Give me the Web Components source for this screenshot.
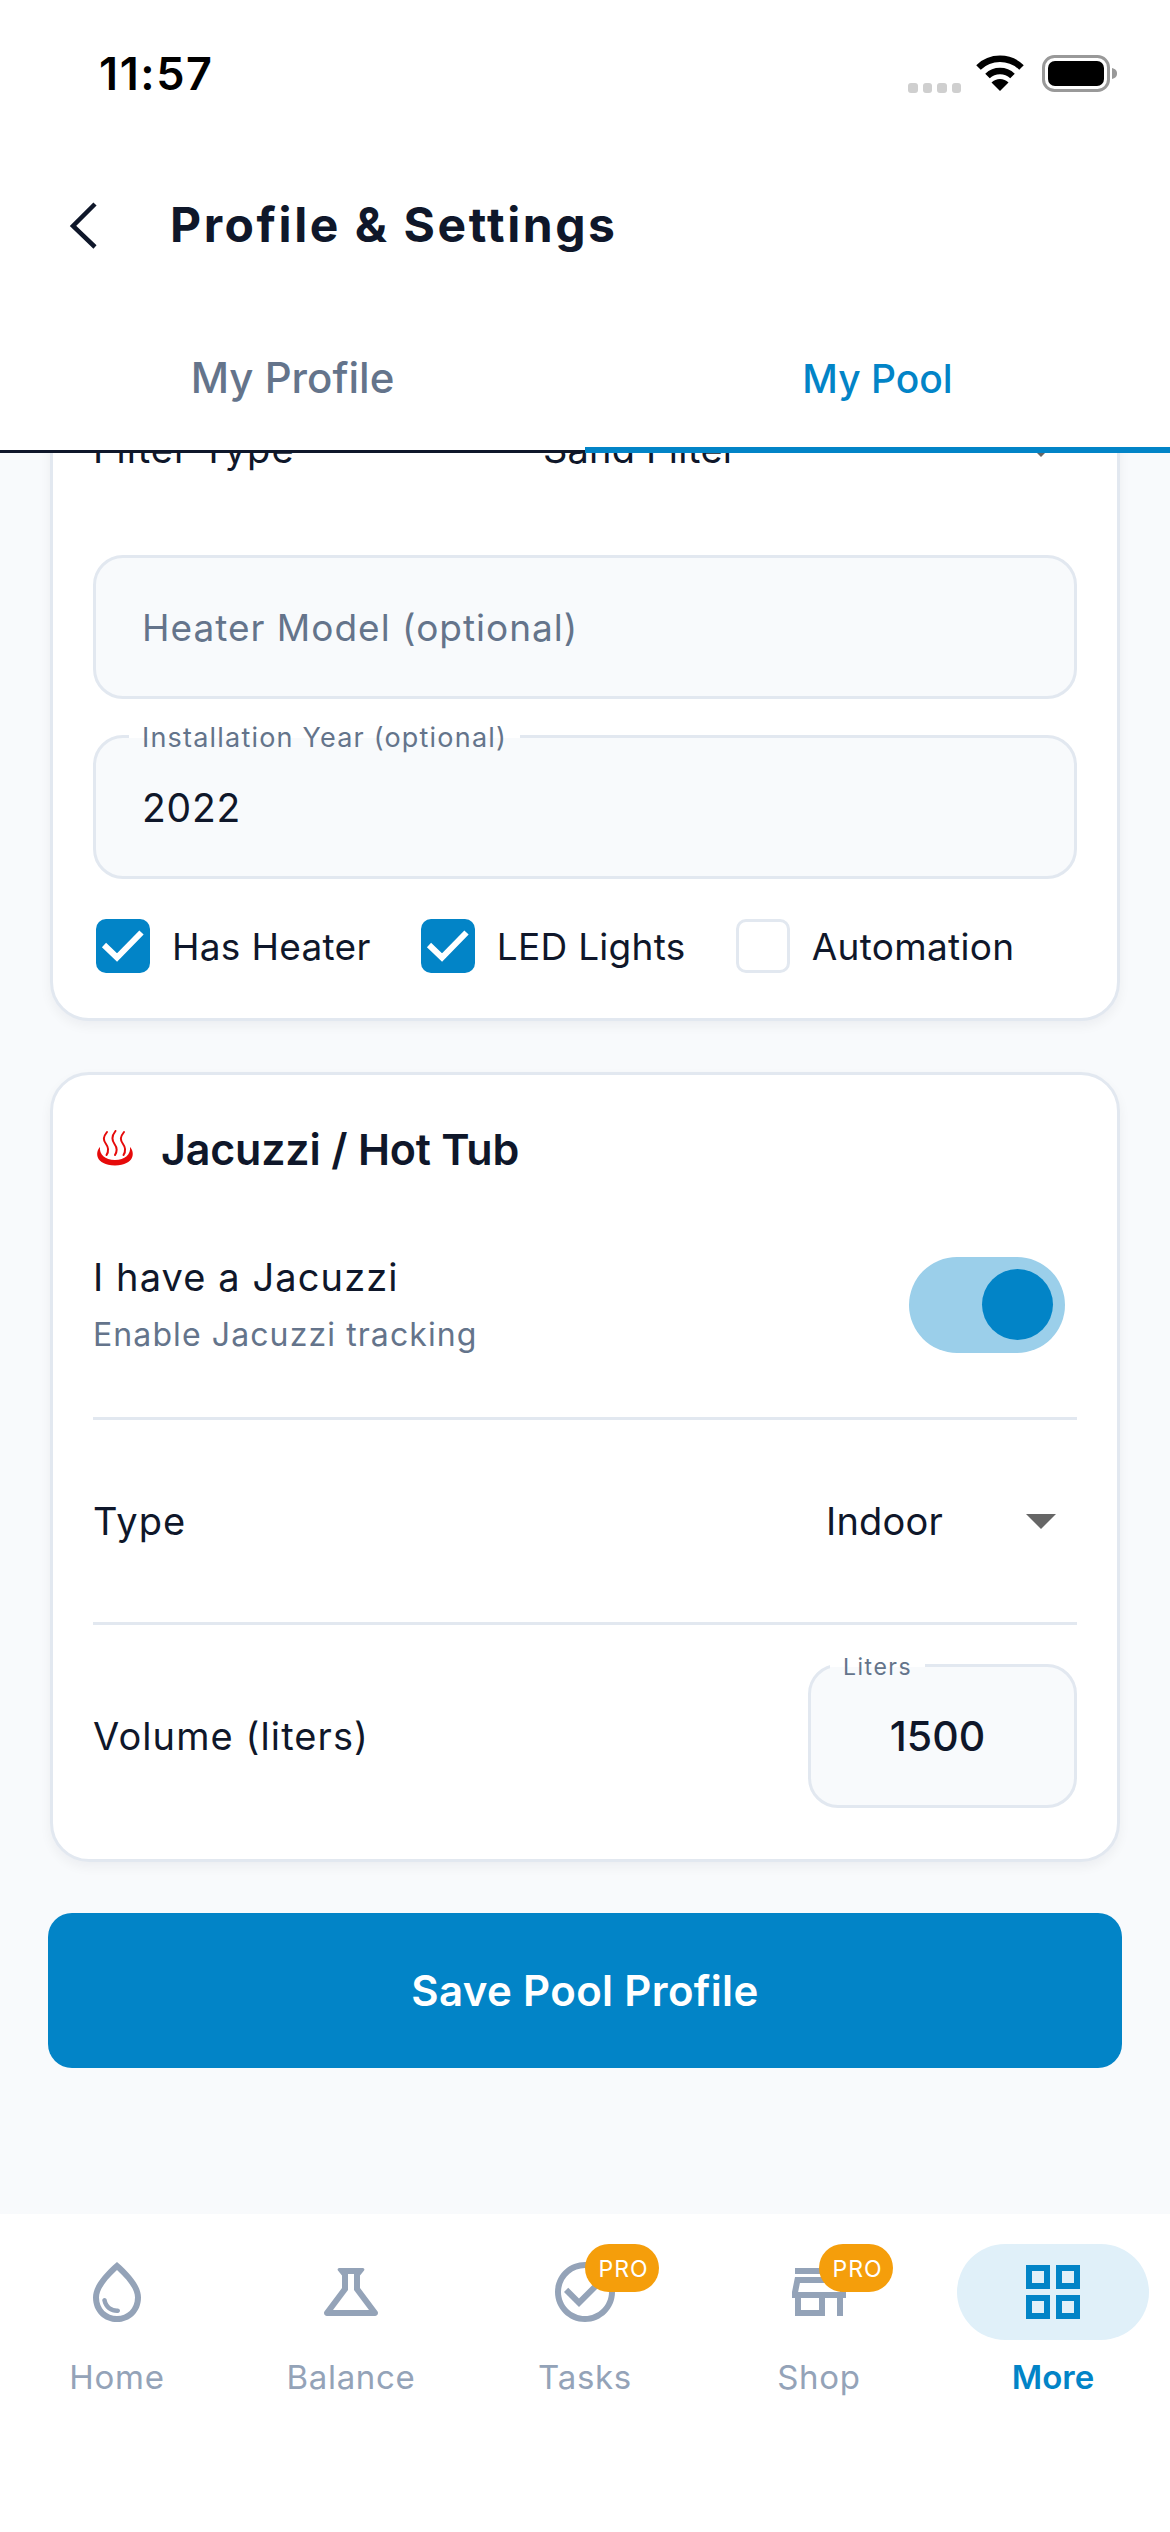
<!DOCTYPE html>
<html>
<head>
<meta charset="utf-8">
<title>Profile & Settings</title>
<style>
  html, body { margin: 0; padding: 0; }
  body { width: 1170px; height: 2532px; overflow: hidden; font-family: Inter, "Liberation Sans", sans-serif; color: #0f172a; }
</style>
</head>
<body>
<app-shell>
  <status-bar slot="top" time="11:57"></status-bar>
  <screen-header slot="top">Profile &amp; Settings</screen-header>
  <tab-bar slot="top" first="My Profile" second="My Pool"></tab-bar>

  <setting-card>
    <setting-row label="Filter Type" height="202" style="margin-bottom:5px"><select-value width="564">Sand Filter</select-value></setting-row>
    <outlined-field placeholder="Heater Model (optional)"></outlined-field>
    <outlined-field label="Installation Year (optional)" value="2022" style="margin-top:36px"></outlined-field>
    <check-row>
      <check-option checked>Has Heater</check-option>
      <check-option checked>LED Lights</check-option>
      <check-option>Automation</check-option>
    </check-row>
  </setting-card>

  <setting-card style="margin-top:51px">
    <card-title>Jacuzzi / Hot Tub</card-title>
    <setting-row label="I have a Jacuzzi" sub="Enable Jacuzzi tracking" height="228" divider style="margin-top:9px"><toggle-switch></toggle-switch></setting-row>
    <setting-row label="Type" height="205" divider><select-value width="281">Indoor</select-value></setting-row>
    <setting-row label="Volume (liters)" height="222" style="margin-bottom:12px"><outlined-field small label="Liters" value="1500"></outlined-field></setting-row>
  </setting-card>

  <save-button>Save Pool Profile</save-button>

  <bottom-nav slot="bottom">
    <nav-item icon="drop" label="Home"></nav-item>
    <nav-item icon="flask" label="Balance"></nav-item>
    <nav-item icon="task" label="Tasks" pro></nav-item>
    <nav-item icon="store" label="Shop" pro></nav-item>
    <nav-item icon="grid" label="More" active></nav-item>
  </bottom-nav>
</app-shell>

<script>
// contenedor de la pantalla, el contenido se recorta por arriba como si hubiera scroll
class AppShell extends HTMLElement {
  constructor() {
    super();
    this.attachShadow({ mode: 'open' });
  }
  connectedCallback() {
    this.shadowRoot.innerHTML = `
    <style>
      :host { display: flex; flex-direction: column; width: 1170px; height: 2532px; background: #fff; }
      .scroll {
        flex: 1; min-height: 0; overflow: hidden; background: #f8fafc;
        display: flex; flex-direction: column; justify-content: flex-end;
        padding: 0 50px 146px;
      }
      ::slotted(*) { flex-shrink: 0; }
    </style>
    <slot name="top"></slot>
    <div class="scroll"><slot></slot></div>
    <slot name="bottom"></slot>`;
  }
}

class StatusBar extends HTMLElement {
  constructor() {
    super();
    this.attachShadow({ mode: 'open' });
  }
  connectedCallback() {
    const time = this.getAttribute('time') ?? '';
    this.shadowRoot.innerHTML = `
    <style>
      :host { display: flex; align-items: center; justify-content: space-between; height: 132px; padding: 14px 51px 0 99px; box-sizing: border-box; background: #fff; }
      .time { font: 600 45px/1 Inter, sans-serif; color: #000; letter-spacing: 1.6px; }
      .icons { display: flex; align-items: flex-start; height: 40px; margin-top: 4px; }
      .dots { display: flex; gap: 5px; margin: 28px 14px 0 0; }
      .dots i { width: 9.5px; height: 9.5px; border-radius: 3px; background: #cfcfcf; }
      .wifi { width: 50px; height: 36px; margin-right: 17px; }
      .batt { width: 77px; height: 38px; }
    </style>
    <span class="time">${time}</span>
    <div class="icons">
      <div class="dots"><i></i><i></i><i></i><i></i></div>
      <svg class="wifi" viewBox="0 0 50 36" fill="none" stroke="#000">
        <path d="M3.5 12.5 A31 31 0 0 1 46.5 12.5" stroke-width="6.5"/>
        <path d="M12.5 21 A18 18 0 0 1 37.5 21" stroke-width="6.5"/>
        <path d="M25 36 L16.5 27.5 A12 12 0 0 1 33.500 27.500 Z" fill="#000" stroke="none"/>
      </svg>
      <svg class="batt" viewBox="0 0 77 38">
        <rect x="1.500" y="1.500" width="65" height="34" rx="11" fill="none" stroke="#999" stroke-width="3"/>
        <rect x="6" y="6" width="56" height="25" rx="7" fill="#000"/>
        <path d="M70 13 C74 14 75 16 75 18.500 C75 21 74 23 70 24 Z" fill="#999"/>
      </svg>
    </div>`;
  }
}

class ScreenHeader extends HTMLElement {
  constructor() {
    super();
    this.attachShadow({ mode: 'open' });
  }
  connectedCallback() {
    this.shadowRoot.innerHTML = `
    <style>
      :host { display: flex; align-items: center; height: 186px; padding-left: 68px; background: #fff; }
      svg { width: 32px; height: 48px; margin-right: 70px; }
      h1 { margin: 0; font: 700 48px/1 Inter, sans-serif; color: #0f172a; letter-spacing: 2.55px; white-space: nowrap; }
    </style>
    <svg viewBox="0 0 32 48" fill="none" stroke="#0f172a" stroke-width="4.500"><path d="M27 3 L5 25 L27 46"/></svg>
    <h1><slot></slot></h1>`;
  }
}

class TabBar extends HTMLElement {
  constructor() {
    super();
    this.attachShadow({ mode: 'open' });
  }
  connectedCallback() {
    this.shadowRoot.innerHTML = `
    <style>
      :host { display: grid; grid-template-columns: 1fr 1fr; position: relative; height: 135px; box-sizing: border-box; border-bottom: 3px solid #0f172a; background: #fff; }
      .tab { display: flex; align-items: center; justify-content: center; padding-bottom: 12px; font: 500 42px/1 Inter, sans-serif; color: #64748b; }
      .tab.on { color: #0284c7; font-size: 39px; }
      .line { position: absolute; left: 585px; right: 0; bottom: -3px; height: 6px; background: #0284c7; }
    </style>
    <div class="tab">${this.getAttribute('first')}</div>
    <div class="tab on">${this.getAttribute('second')}</div>
    <div class="line"></div>`;
  }
}

class SettingCard extends HTMLElement {
  constructor() {
    super();
    this.attachShadow({ mode: 'open' });
  }
  connectedCallback() {
    this.shadowRoot.innerHTML = `
    <style>
      :host { display: block; box-sizing: border-box; padding: 40px 40px 0; background: #fff; border: 3px solid #e2e8f0; border-radius: 39px; box-shadow: 0 5px 12px rgba(15,23,42,.05); }
    </style>
    <slot></slot>`;
  }
}

class CardTitle extends HTMLElement {
  constructor() {
    super();
    this.attachShadow({ mode: 'open' });
  }
  connectedCallback() {
    this.shadowRoot.innerHTML = `
    <style>
      :host { display: flex; align-items: center; height: 68px; font: 600 43px/1 Inter, sans-serif; letter-spacing: -0.2px; color: #0f172a; }
      svg { width: 42px; height: 38px; margin: 0 24px 0 2px; }
    </style>
    <svg viewBox="0 0 42 38" fill="none" stroke="#e60a0a" stroke-linecap="round">
      <path d="M12 2 C8 7 8 10 11 14 C14 18 14 21 11.500 25" stroke-width="2"/>
      <path d="M20.500 1 C16.500 6 16.500 10 19.500 14 C22.500 18 22.500 21 20 25" stroke-width="2"/>
      <path d="M29 2 C25 7 25 10 28 14 C31 18 31 21 28.500 25" stroke-width="2"/>
      <path d="M5 17 C0 22 0 35 20 35.500 C40 35 40 22 35 17 C36 24 30 30 20 30 C10 30 4 24 5 17 Z" fill="#e60a0a" stroke="none"/>
    </svg>
    <span><slot></slot></span>`;
  }
}

class SettingRow extends HTMLElement {
  constructor() {
    super();
    this.attachShadow({ mode: 'open' });
  }
  connectedCallback() {
    const label = this.getAttribute('label') ?? '';
    const sub = this.getAttribute('sub');
    const height = this.getAttribute('height') ?? '200';
    const subHtml = sub ? `<div class="sub">${sub}</div>` : '';
    this.shadowRoot.innerHTML = `
    <style>
      :host { display: flex; align-items: center; justify-content: space-between; box-sizing: border-box; height: ${height}px; }
      :host([divider]) { border-bottom: 3px solid #e2e8f0; }
      .label { font: 400 38px/1 Inter, sans-serif; color: #0f172a; letter-spacing: 1.1px; }
      .sub { font: 400 32px/1 Inter, sans-serif; color: #64748b; letter-spacing: 1.1px; margin-top: 23px; }
    </style>
    <div><div class="label">${label}</div>${subHtml}</div>
    <slot></slot>`;
  }
}

class SelectValue extends HTMLElement {
  constructor() {
    super();
    this.attachShadow({ mode: 'open' });
  }
  connectedCallback() {
    const width = this.getAttribute('width') ?? '280';
    this.shadowRoot.innerHTML = `
    <style>
      :host { display: flex; align-items: center; justify-content: space-between; box-sizing: border-box; width: ${width}px; padding: 0 21px 0 30px; font: 400 38px/1 Inter, sans-serif; color: #0f172a; letter-spacing: 0.2px; }
      i { width: 0; height: 0; border-left: 15px solid transparent; border-right: 15px solid transparent; border-top: 15px solid #666; }
    </style>
    <span><slot></slot></span><i></i>`;
  }
}

class OutlinedField extends HTMLElement {
  constructor() {
    super();
    this.attachShadow({ mode: 'open' });
  }
  connectedCallback() {
    const label = this.getAttribute('label');
    const value = this.getAttribute('value');
    const placeholder = this.getAttribute('placeholder') ?? '';
    const labelHtml = label ? `<span class="notch">${label}</span>` : '';
    const text = value
      ? `<span class="value">${value}</span>`
      : `<span class="hint">${placeholder}</span>`;
    this.shadowRoot.innerHTML = `
    <style>
      :host { display: flex; align-items: center; position: relative; box-sizing: border-box; height: 144px; padding: 0 46px; background: #f8fafc; border: 3px solid #e2e8f0; border-radius: 30px; font: 400 37px/1 Inter, sans-serif; letter-spacing: 1px; }
      .value { color: #0f172a; font-size: 39px; letter-spacing: 0.8px; }
      .hint { color: #64748b; }
      .notch { position: absolute; left: 33px; top: -14px; padding: 0 13px; font-size: 27px; line-height: 28px; letter-spacing: 1.2px; color: #64748b; white-space: nowrap; background: linear-gradient(#fff 50%, #f8fafc 50%); }
      :host([small]) { width: 269px; height: 144px; justify-content: center; padding: 0 10px 0 0; }
      :host([small]) .value { font-weight: 500; font-size: 41px; letter-spacing: 0; }
      :host([small]) .notch { font-size: 23px; left: 19px; padding: 0 13px; letter-spacing: 1.5px; }
    </style>
    ${labelHtml}${text}`;
  }
}

class CheckRow extends HTMLElement {
  constructor() {
    super();
    this.attachShadow({ mode: 'open' });
  }
  connectedCallback() {
    this.shadowRoot.innerHTML = `
    <style>
      :host { display: flex; align-items: center; padding: 40px 0 45px 3px; gap: 50px; }
    </style>
    <slot></slot>`;
  }
}

class CheckOption extends HTMLElement {
  constructor() {
    super();
    this.attachShadow({ mode: 'open' });
  }
  connectedCallback() {
    const mark = this.hasAttribute('checked')
      ? '<svg viewBox="0 0 54 54" fill="none" stroke="#fff" stroke-width="6"><path d="M8 26 L21 38.500 L45.500 13.500"/></svg>'
      : '';
    this.shadowRoot.innerHTML = `
    <style>
      :host { display: flex; align-items: center; gap: 22px; font: 400 37px/1 Inter, sans-serif; color: #0f172a; letter-spacing: 0.3px; white-space: nowrap; }
      .box { flex: none; width: 54px; height: 54px; box-sizing: border-box; border-radius: 10px; border: 3px solid #e2e8f0; background: #fff; }
      :host([checked]) .box { border: 0; background: #0284c7; }
      svg { display: block; width: 54px; height: 54px; }
    </style>
    <div class="box">${mark}</div>
    <span><slot></slot></span>`;
  }
}

class ToggleSwitch extends HTMLElement {
  constructor() {
    super();
    this.attachShadow({ mode: 'open' });
  }
  connectedCallback() {
    this.shadowRoot.innerHTML = `
    <style>
      :host { display: flex; align-items: center; justify-content: flex-end; box-sizing: border-box; width: 156px; height: 96px; margin-right: 12px; padding-right: 12px; border-radius: 48px; background: #9bcfea; }
      i { width: 71px; height: 71px; border-radius: 50%; background: #0284c7; }
    </style>
    <i></i>`;
  }
}

class SaveButton extends HTMLElement {
  constructor() {
    super();
    this.attachShadow({ mode: 'open' });
  }
  connectedCallback() {
    this.shadowRoot.innerHTML = `
    <style>
      :host { display: flex; align-items: center; justify-content: center; height: 155px; margin: 51px -2px 0; border-radius: 24px; background: #0284c7; color: #fff; font: 600 42px/1 Inter, sans-serif; letter-spacing: 0.35px; }
    </style>
    <slot></slot>`;
  }
}

class BottomNav extends HTMLElement {
  constructor() {
    super();
    this.attachShadow({ mode: 'open' });
  }
  connectedCallback() {
    this.shadowRoot.innerHTML = `
    <style>
      :host { display: grid; grid-template-columns: repeat(5, 234px); height: 318px; box-sizing: border-box; padding-top: 30px; background: #fff; }
    </style>
    <slot></slot>`;
  }
}

// iconos de material, caja de 24
const NAV_ICONS = {
  drop: 'M12 2c-5.33 4.55-8 8.48-8 11.8 0 4.98 3.8 8.2 8 8.2s8-3.22 8-8.2c0-3.32-2.67-7.25-8-11.8zm0 18c-3.35 0-6-2.57-6-6.2 0-2.34 1.95-5.44 6-9.14 4.05 3.7 6 6.79 6 9.14 0 3.63-2.65 6.2-6 6.2zm-4.17-6c.37 0 .67.26.74.62.41 2.22 2.28 2.98 3.64 2.87.43-.02.79.32.79.75 0 .4-.32.73-.72.75-2.13.13-4.62-1.09-5.19-4.12-.08-.45.28-.87.74-.87z',
  flask: 'M13 11.33L18 18H6l5-6.67V6h2m2.96-2H8.04c-.42 0-.65.48-.39.81L9 6.5v4.17L3.2 18.4c-.49.66-.02 1.6.8 1.6h16c.82 0 1.29-.94.8-1.6L15 10.67V6.5l1.35-1.69c.26-.33.03-.81-.39-.81z',
  task: 'M16.59 7.58L10 14.17l-3.59-3.58L5 12l5 5 8-8zM12 2C6.48 2 2 6.48 2 12s4.48 10 10 10 10-4.48 10-10S17.52 2 12 2zm0 18c-4.42 0-8-3.58-8-8s3.58-8 8-8 8 3.58 8 8-3.58 8-8 8z',
  store: 'M20 4H4v2h16V4zm1 10v-2l-1-5H4l-1 5v2h1v6h10v-6h4v6h2v-6h1zm-9 4H6v-4h6v4zm-6.96-6l.6-3h12.72l.6 3H5.04z',
  grid: 'M3 3v8h8V3H3zm6 6H5V5h4v4zm-6 4v8h8v-8H3zm6 6H5v-4h4v4zm4-16v8h8V3h-8zm6 6h-4V5h4v4zm-6 4v8h8v-8h-8zm6 6h-4v-4h4v4z'
};

class NavItem extends HTMLElement {
  constructor() {
    super();
    this.attachShadow({ mode: 'open' });
  }
  connectedCallback() {
    const icon = NAV_ICONS[this.getAttribute('icon')];
    const label = this.getAttribute('label') ?? '';
    const pro = this.hasAttribute('pro') ? '<span class="pro">PRO</span>' : '';
    this.shadowRoot.innerHTML = `
    <style>
      :host { display: flex; flex-direction: column; align-items: center; color: #94a3b8; }
      :host([active]) { color: #0284c7; }
      .pill { position: relative; display: flex; align-items: center; justify-content: center; width: 192px; height: 96px; border-radius: 48px; }
      :host([active]) .pill { background: #e0f0f9; }
      svg { width: 72px; height: 72px; fill: currentColor; }
      .pro { position: absolute; left: 96px; top: 0; width: 74px; height: 48px; padding: 2px 0 0 3px; box-sizing: border-box; border-radius: 24px; background: #f59e0b; color: #fff; display: flex; align-items: center; justify-content: center; font: 400 23px/1 Inter, sans-serif; letter-spacing: 1px; }
      .label { margin-top: 21px; font: 400 33px/1 Inter, sans-serif; letter-spacing: 0.7px; }
      :host([active]) .label { font-weight: 600; letter-spacing: 0; }
    </style>
    <div class="pill"><svg viewBox="0 0 24 24"><path d="${icon}"/></svg>${pro}</div>
    <div class="label">${label}</div>`;
  }
}

customElements.define('app-shell', AppShell);
customElements.define('status-bar', StatusBar);
customElements.define('screen-header', ScreenHeader);
customElements.define('tab-bar', TabBar);
customElements.define('setting-card', SettingCard);
customElements.define('card-title', CardTitle);
customElements.define('setting-row', SettingRow);
customElements.define('select-value', SelectValue);
customElements.define('outlined-field', OutlinedField);
customElements.define('check-row', CheckRow);
customElements.define('check-option', CheckOption);
customElements.define('toggle-switch', ToggleSwitch);
customElements.define('save-button', SaveButton);
customElements.define('bottom-nav', BottomNav);
customElements.define('nav-item', NavItem);
</script>
</body>
</html>
